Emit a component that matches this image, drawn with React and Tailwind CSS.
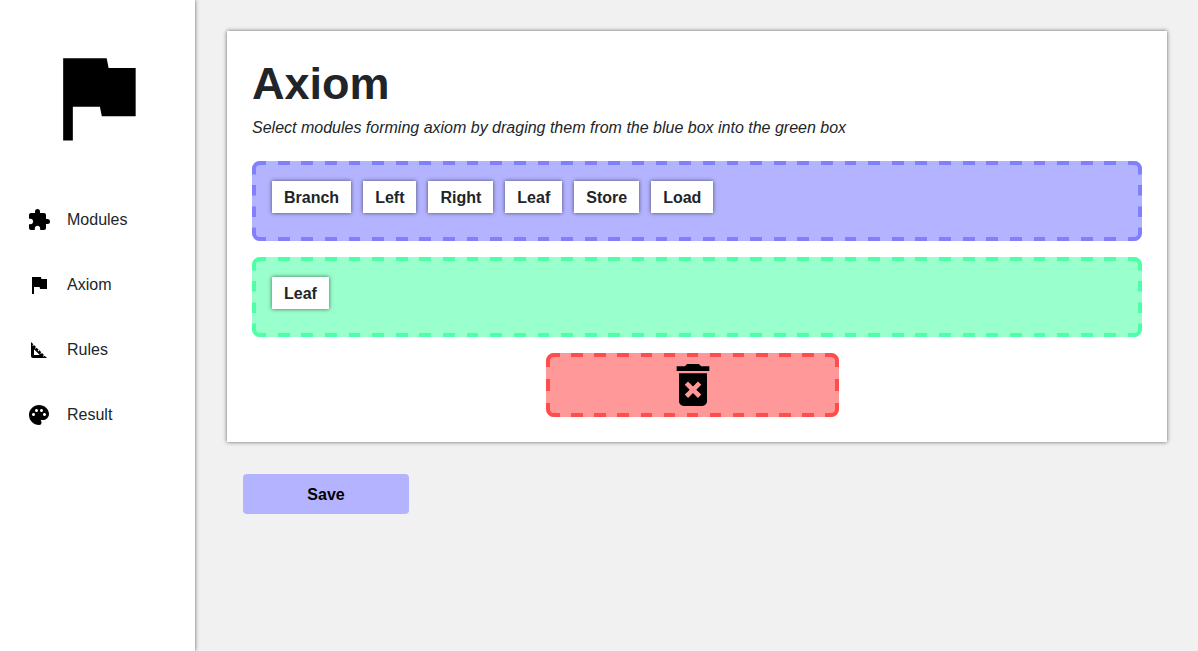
import React from "react";
import { MdExtension, MdFlag, MdSquareFoot, MdPalette, MdDeleteForever } from "react-icons/md";

const links = [
  { label: "Modules", Icon: MdExtension },
  { label: "Axiom", Icon: MdFlag },
  { label: "Rules", Icon: MdSquareFoot },
  { label: "Result", Icon: MdPalette },
];

const modules = ["Branch", "Left", "Right", "Leaf", "Store", "Load"];
const axiom = ["Leaf"];

// Long, evenly spaced dashes with solid rounded corners; the edge tile repeats a whole number of times.
const dashes = {
  blue: "border-[#8080ff] bg-[#b3b3ff] [border-image:url(data:image/svg+xml,%3Csvg%20xmlns=%22http://www.w3.org/2000/svg%22%20width=%22396%22%20height=%22396%22%3E%3Cpath%20fill=%22none%22%20stroke=%22%238080ff%22%20stroke-width=%2240%22%20d=%22M20%20139V80A60%2060%200%200%201%2080%2020H139M257%2020H316A60%2060%200%200%201%20376%2080V139M376%20257V316A60%2060%200%200%201%20316%20376H257M139%20376H80A60%2060%200%200%201%2020%20316V257%22/%3E%3C/svg%3E)_80/8px_round]",
  green: "border-[#4dffa6] bg-[#99ffcc] [border-image:url(data:image/svg+xml,%3Csvg%20xmlns=%22http://www.w3.org/2000/svg%22%20width=%22396%22%20height=%22396%22%3E%3Cpath%20fill=%22none%22%20stroke=%22%234dffa6%22%20stroke-width=%2240%22%20d=%22M20%20139V80A60%2060%200%200%201%2080%2020H139M257%2020H316A60%2060%200%200%201%20376%2080V139M376%20257V316A60%2060%200%200%201%20316%20376H257M139%20376H80A60%2060%200%200%201%2020%20316V257%22/%3E%3C/svg%3E)_80/8px_round]",
  red: "border-[#ff4d4d] bg-[#ff9999] [border-image:url(data:image/svg+xml,%3Csvg%20xmlns=%22http://www.w3.org/2000/svg%22%20width=%22396%22%20height=%22396%22%3E%3Cpath%20fill=%22none%22%20stroke=%22%23ff4d4d%22%20stroke-width=%2240%22%20d=%22M20%20139V80A60%2060%200%200%201%2080%2020H139M257%2020H316A60%2060%200%200%201%20376%2080V139M376%20257V316A60%2060%200%200%201%20316%20376H257M139%20376H80A60%2060%200%200%201%2020%20316V257%22/%3E%3C/svg%3E)_80/8px_round]",
};

function Chip({ children }) {
  return (
    <li
      draggable="true"
      className="cursor-grab bg-white px-3 pt-[5px] pb-[3px] font-bold shadow-[0_0_4px_#00000099]"
    >
      {children}
    </li>
  );
}

function DropList({ names, tone, className }) {
  return (
    <ul className={`flex min-h-20 flex-wrap content-start gap-3 rounded-lg border-4 border-dashed p-4 ${dashes[tone]} ${className}`}>
      {names.map((name) => (
        <Chip key={name}>{name}</Chip>
      ))}
    </ul>
  );
}

export default function App() {
  return (
    <div className="flex min-h-screen bg-[#f1f1f1] font-['Liberation_Sans',Arial,sans-serif] text-base text-[#212529]">
      <aside className="w-[195px] shrink-0 bg-white pt-[39px] shadow-[0_0_4px_#00000099]">
        <MdFlag className="ml-[39px] size-[116px] text-black" aria-hidden="true" />
        <nav className="mt-8">
          {links.map(({ label, Icon }) => (
            <a key={label} href={"#" + label.toLowerCase()} className="flex h-[65px] items-center gap-4 px-[27px]">
              <Icon className="size-6 text-black" aria-hidden="true" />
              <span>{label}</span>
            </a>
          ))}
        </nav>
      </aside>
      <main className="min-w-0 grow py-[31px] pr-[31px] pl-8">
        <section className="bg-white px-[25px] pt-[25px] pb-[25px] shadow-[0_0_4px_#00000099]">
          <h1 className="text-[45px] leading-[56px] font-bold">Axiom</h1>
          <p className="mt-1 italic">Select modules forming axiom by draging them from the blue box into the green box</p>
          <DropList names={modules} tone="blue" className="mt-[21px]" />
          <DropList names={axiom} tone="green" className="mt-4" />
          <div className={`mt-4 ml-[33%] flex w-[33%] justify-center rounded-lg border-4 border-dashed ${dashes.red}`}>
            <MdDeleteForever className="size-14 text-black" aria-hidden="true" />
          </div>
        </section>
        <button type="button" className="mt-8 ml-4 h-10 w-[166px] rounded bg-[#b3b3ff] pt-0.5 font-bold text-black">
          Save
        </button>
      </main>
    </div>
  );
}
